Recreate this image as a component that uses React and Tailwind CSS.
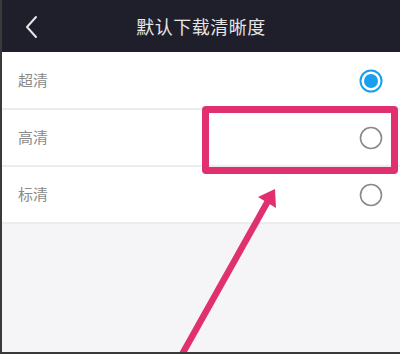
import React from "react";

function Radio({ checked }) {
  return (
    <svg width="26" height="26" viewBox="0 0 26 26">
      {checked ? (
        <>
          <circle cx="13" cy="13" r="10.5" fill="none" stroke="#1a9ef0" strokeWidth="2" />
          <circle cx="13" cy="13" r="7" fill="#1a9ef0" />
        </>
      ) : (
        <circle cx="13" cy="13" r="10.5" fill="none" stroke="#8a8a8a" strokeWidth="1.6" />
      )}
    </svg>
  );
}

function Row({ label, checked }) {
  return (
    <div className="flex h-[57px] items-center justify-between pl-[16px] pr-[16px] bg-white border-b-2 border-[#ececec]">
      <span className="text-[15px] text-[#8a8a8a]">{label}</span>
      <Radio checked={checked} />
    </div>
  );
}

export default function App() {
  return (
    <div
      className="relative w-[400px] h-[354px] overflow-hidden bg-[#f5f4f7] border-l-2 border-b-2 border-[#3a3a3c]"
      style={{ fontFamily: '"Noto Sans CJK SC", "Noto Sans", sans-serif' }}
    >
      <div className="relative flex h-[52px] items-center justify-center bg-[#1e1f2b]">
        <svg className="absolute left-[22px] top-[15px]" width="16" height="24" viewBox="0 0 16 24">
          <path d="M12 2 L3 12 L12 22" fill="none" stroke="#e6e6e6" strokeWidth="2" strokeLinecap="round" strokeLinejoin="round" />
        </svg>
        <span className="text-[18px] text-[#e6e6e6] tracking-[0.5px]">默认下载清晰度</span>
      </div>
      <div className="h-[1px] bg-white" />
      <Row label="超清" checked />
      <Row label="高清" />
      <Row label="标清" />

      <div className="absolute left-[200px] top-[106px] w-[196px] h-[68px] rounded-[4px] border-[7px] border-[#e0306f]" />
      <svg className="absolute left-0 top-0" width="400" height="354" viewBox="0 0 400 354">
        <line x1="178" y1="358" x2="266" y2="201" stroke="#e0306f" strokeWidth="6.5" />
        <polygon points="273,189 256,197 274,208" fill="#e0306f" />
      </svg>
    </div>
  );
}
